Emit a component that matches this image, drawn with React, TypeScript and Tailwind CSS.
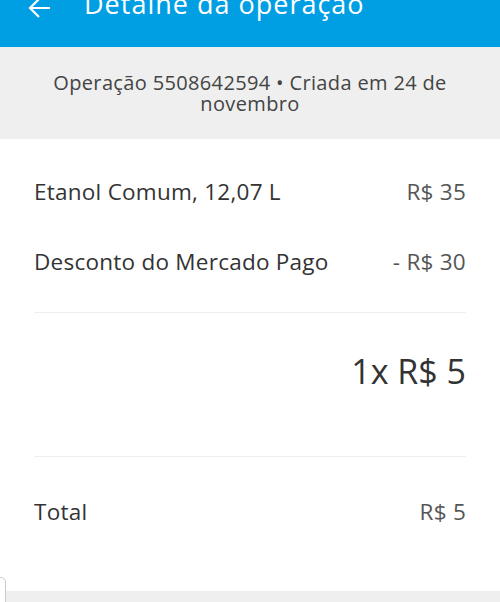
import React from 'react';

const font = { fontFamily: '"Open Sans", Lato, sans-serif' };

function Row({ label, value }: { label: string; value: string }) {
  return (
    <div className="flex items-center justify-between h-[70px] text-[22.5px] tracking-[0.25px] text-[#333]">
      <span>{label}</span>
      <span className="text-[#555]">{value}</span>
    </div>
  );
}

export default function App() {
  return (
    <div className="w-[500px] h-[602px] overflow-hidden bg-white relative" style={font}>
      <div className="h-[47px] bg-[#009ee3] flex items-start text-white overflow-hidden">
        <svg className="ml-[28px] mt-[-2px] w-[23px] h-[20px]" viewBox="0 0 23 20" fill="none" stroke="white" strokeWidth="2.2">
          <path d="M22 10H2M11 1L2 10l9 9" />
        </svg>
        <h1 className="ml-[33px] mt-[-16px] text-[27px] tracking-[1px] leading-[40px] font-normal">Detalhe da operação</h1>
      </div>
      <div className="h-[92px] bg-[#efefef] flex items-center justify-center px-[40px]">
        <p className="text-center text-[20px] tracking-[0.35px] leading-[21px] text-[#444]">
          Operação 5508642594 • Criada em 24 de novembro
        </p>
      </div>
      <div className="px-[34px] pt-[18px]">
        <Row label="Etanol Comum, 12,07 L" value="R$ 35" />
        <Row label="Desconto do Mercado Pago" value="- R$ 30" />
        <div className="mt-[15px] border-t border-[#eee]" />
        <div className="flex justify-end h-[143px] pt-[38px] text-[34px] leading-[40px] text-[#333]">1x R$ 5</div>
        <div className="border-t border-[#eee]" />
        <div className="mt-[20px]">
          <Row label="Total" value="R$ 5" />
        </div>
      </div>
      <div className="absolute left-0 right-0 top-[591px] bottom-0 bg-[#efefef]" />
      <div className="absolute left-[-4px] top-[577px] w-[10px] h-[30px] rounded-[5px] border border-[#ccc] bg-white" />
    </div>
  );
}
